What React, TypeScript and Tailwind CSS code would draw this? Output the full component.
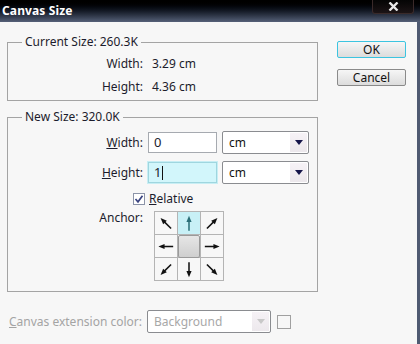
import React from "react";

const font = { fontFamily: '"Noto Sans", "DejaVu Sans", sans-serif' };

function Arrow({ angle, color = "#111" }: { angle: number; color?: string }) {
  return (
    <svg width="23" height="23" viewBox="0 0 23 23" aria-hidden>
      <g transform={`rotate(${angle} 11.5 11.5)`}>
        <line x1="11.5" y1="19" x2="11.5" y2="8" stroke={color} strokeWidth="1.6" />
        <polygon points="11.5,3.5 8.8,10 14.2,10" fill={color} />
      </g>
    </svg>
  );
}

function Select({ value, width, disabled }: { value: string; width: string; disabled?: boolean }) {
  return (
    <div
      className={`flex h-[23px] items-center rounded-[2px] border border-[#8a8c90] bg-white ${width}`}
    >
      <span className={`flex-1 pl-[6px] text-[12px] ${disabled ? "text-[#a8a8a8]" : "text-[#111]"}`}>
        {value}
      </span>
      <span className="mr-[1px] flex h-[19px] w-[17px] items-center justify-center bg-gradient-to-b from-[#f6f2f6] to-[#ece8ec]">
        <svg width="8" height="5" viewBox="0 0 8 5">
          <polygon points="0,0 8,0 4,5" fill={disabled ? "#c8c8c8" : "#15154a"} />
        </svg>
      </span>
    </div>
  );
}

export default function App() {
  const arrows: (number | null)[] = [-45, 0, 45, -90, null, 90, -135, 180, 135];

  return (
    <div className="flex h-[344px] w-[420px] flex-col overflow-hidden bg-[#f7f7f7] text-[12px] text-[#1c1c2c]" style={font}>
      <div className="relative flex h-[22px] shrink-0 items-center bg-gradient-to-b from-[#000000] via-[#141a26] to-[#566179] pl-[2px]">
        <span className="text-[12px] font-bold tracking-[0.01em] text-white">Canvas Size</span>
        <div className="absolute right-[6px] top-0 flex h-[14px] w-[42px] items-center justify-center rounded-b-[3px] border border-t-0 border-[#3a2a2a] bg-gradient-to-b from-[#050505] to-[#1c1416]">
          <svg width="11" height="9" viewBox="0 0 11 9" aria-label="Close">
            <path d="M1.5 0.5 L9.5 8.5 M9.5 0.5 L1.5 8.5" stroke="#e8e8e8" strokeWidth="2.4" />
          </svg>
        </div>
      </div>

      <div className="flex flex-1 border-r-[3px] border-[#4f5a72]">
        <div className="ml-[7px] flex w-[311px] flex-col">
          <fieldset className="mt-[13px] h-[66px] border border-[#a4a4a4] pt-0">
            <legend className="ml-[14px] px-[3px] leading-[14px]">Current Size: 260.3K</legend>
            <div className="grid grid-cols-[135px_1fr] gap-x-[9px] gap-y-[8px] pt-[7px]">
              <span className="text-right leading-[15px]">Width:</span>
              <span className="leading-[15px]">3.29 cm</span>
              <span className="text-right leading-[15px]">Height:</span>
              <span className="leading-[15px]">4.36 cm</span>
            </div>
          </fieldset>

          <fieldset className="mt-[9px] h-[182px] border border-[#a4a4a4]">
            <legend className="ml-[14px] px-[3px] leading-[14px]">New Size: 320.0K</legend>
            <div className="mt-[7px] flex items-center">
              <span className="w-[135px] text-right">
                <u>W</u>idth:
              </span>
              <div className="ml-[5px] flex h-[21px] w-[69px] items-center border border-[#a6aab0] bg-white pl-[5px] text-[13px]">
                0
              </div>
              <div className="ml-[5px]">
                <Select value="cm" width="w-[87px]" />
              </div>
            </div>
            <div className="mt-[7px] flex items-center">
              <span className="w-[135px] text-right">
                <u>H</u>eight:
              </span>
              <div className="ml-[5px] flex h-[21px] w-[69px] items-center border border-[#9fd6df] bg-[#d2f6fb] pl-[5px] text-[13px] shadow-[0_0_0_1px_#c8eef4]">
                1<span className="ml-[1px] h-[14px] w-px bg-[#111]" />
              </div>
              <div className="ml-[5px]">
                <Select value="cm" width="w-[87px]" />
              </div>
            </div>
            <div className="mt-[6px] flex items-center pl-[125px]">
              <span className="flex h-[12px] w-[12px] items-center justify-center border border-[#8c94a8] bg-white">
                <svg width="10" height="10" viewBox="0 0 10 10">
                  <path d="M1.5 5 L4 7.8 L8.5 1.8" fill="none" stroke="#3a4480" strokeWidth="1.7" />
                </svg>
              </span>
              <span className="ml-[4px]">
                <u>R</u>elative
              </span>
            </div>
            <div className="mt-[3px] flex items-start">
              <span className="w-[135px] text-right leading-[14px]">Anchor:</span>
              <div className="ml-[11px] grid grid-cols-[23px_23px_23px] border-l border-t border-[#b4b4b4]">
                {arrows.map((a, i) => (
                  <div
                    key={i}
                    className={`flex h-[23px] w-[23px] items-center justify-center border-b border-r border-[#b4b4b4] ${
                      i === 1 ? "bg-[#c8f0f6]" : ""
                    }`}
                  >
                    {a === null ? (
                      <div className="h-[23px] w-[23px] rounded-[2px] border border-[#9a9a9a] bg-gradient-to-b from-[#e6e6e6] to-[#cfcfcf]" />
                    ) : (
                      <Arrow angle={a} color={i === 1 ? "#2b6f78" : "#111"} />
                    )}
                  </div>
                ))}
              </div>
            </div>
          </fieldset>

          <div className="mt-[18px] flex items-center">
            <span className="w-[135px] text-right text-[#a4a4a4]">
              <u>C</u>anvas extension color:
            </span>
            <div className="ml-[5px]">
              <Select value="Background" width="w-[124px]" disabled />
            </div>
            <span className="ml-[6px] h-[14px] w-[14px] border border-[#a0a0a0] bg-[#f7f7f7]" />
          </div>
        </div>

        <div className="ml-[19px] mt-[19px] flex flex-col gap-[11px]">
          <button className="flex h-[17px] w-[69px] items-center justify-center rounded-[2px] border border-[#3cc4e0] bg-gradient-to-b from-[#f6f6f6] to-[#dcdcdc] text-[12px] leading-none text-[#111]">
            OK
          </button>
          <button className="flex h-[17px] w-[69px] items-center justify-center rounded-[2px] border border-[#8a8a8a] bg-gradient-to-b from-[#f6f6f6] to-[#dcdcdc] text-[12px] leading-none text-[#111]">
            Cancel
          </button>
        </div>
      </div>
    </div>
  );
}
